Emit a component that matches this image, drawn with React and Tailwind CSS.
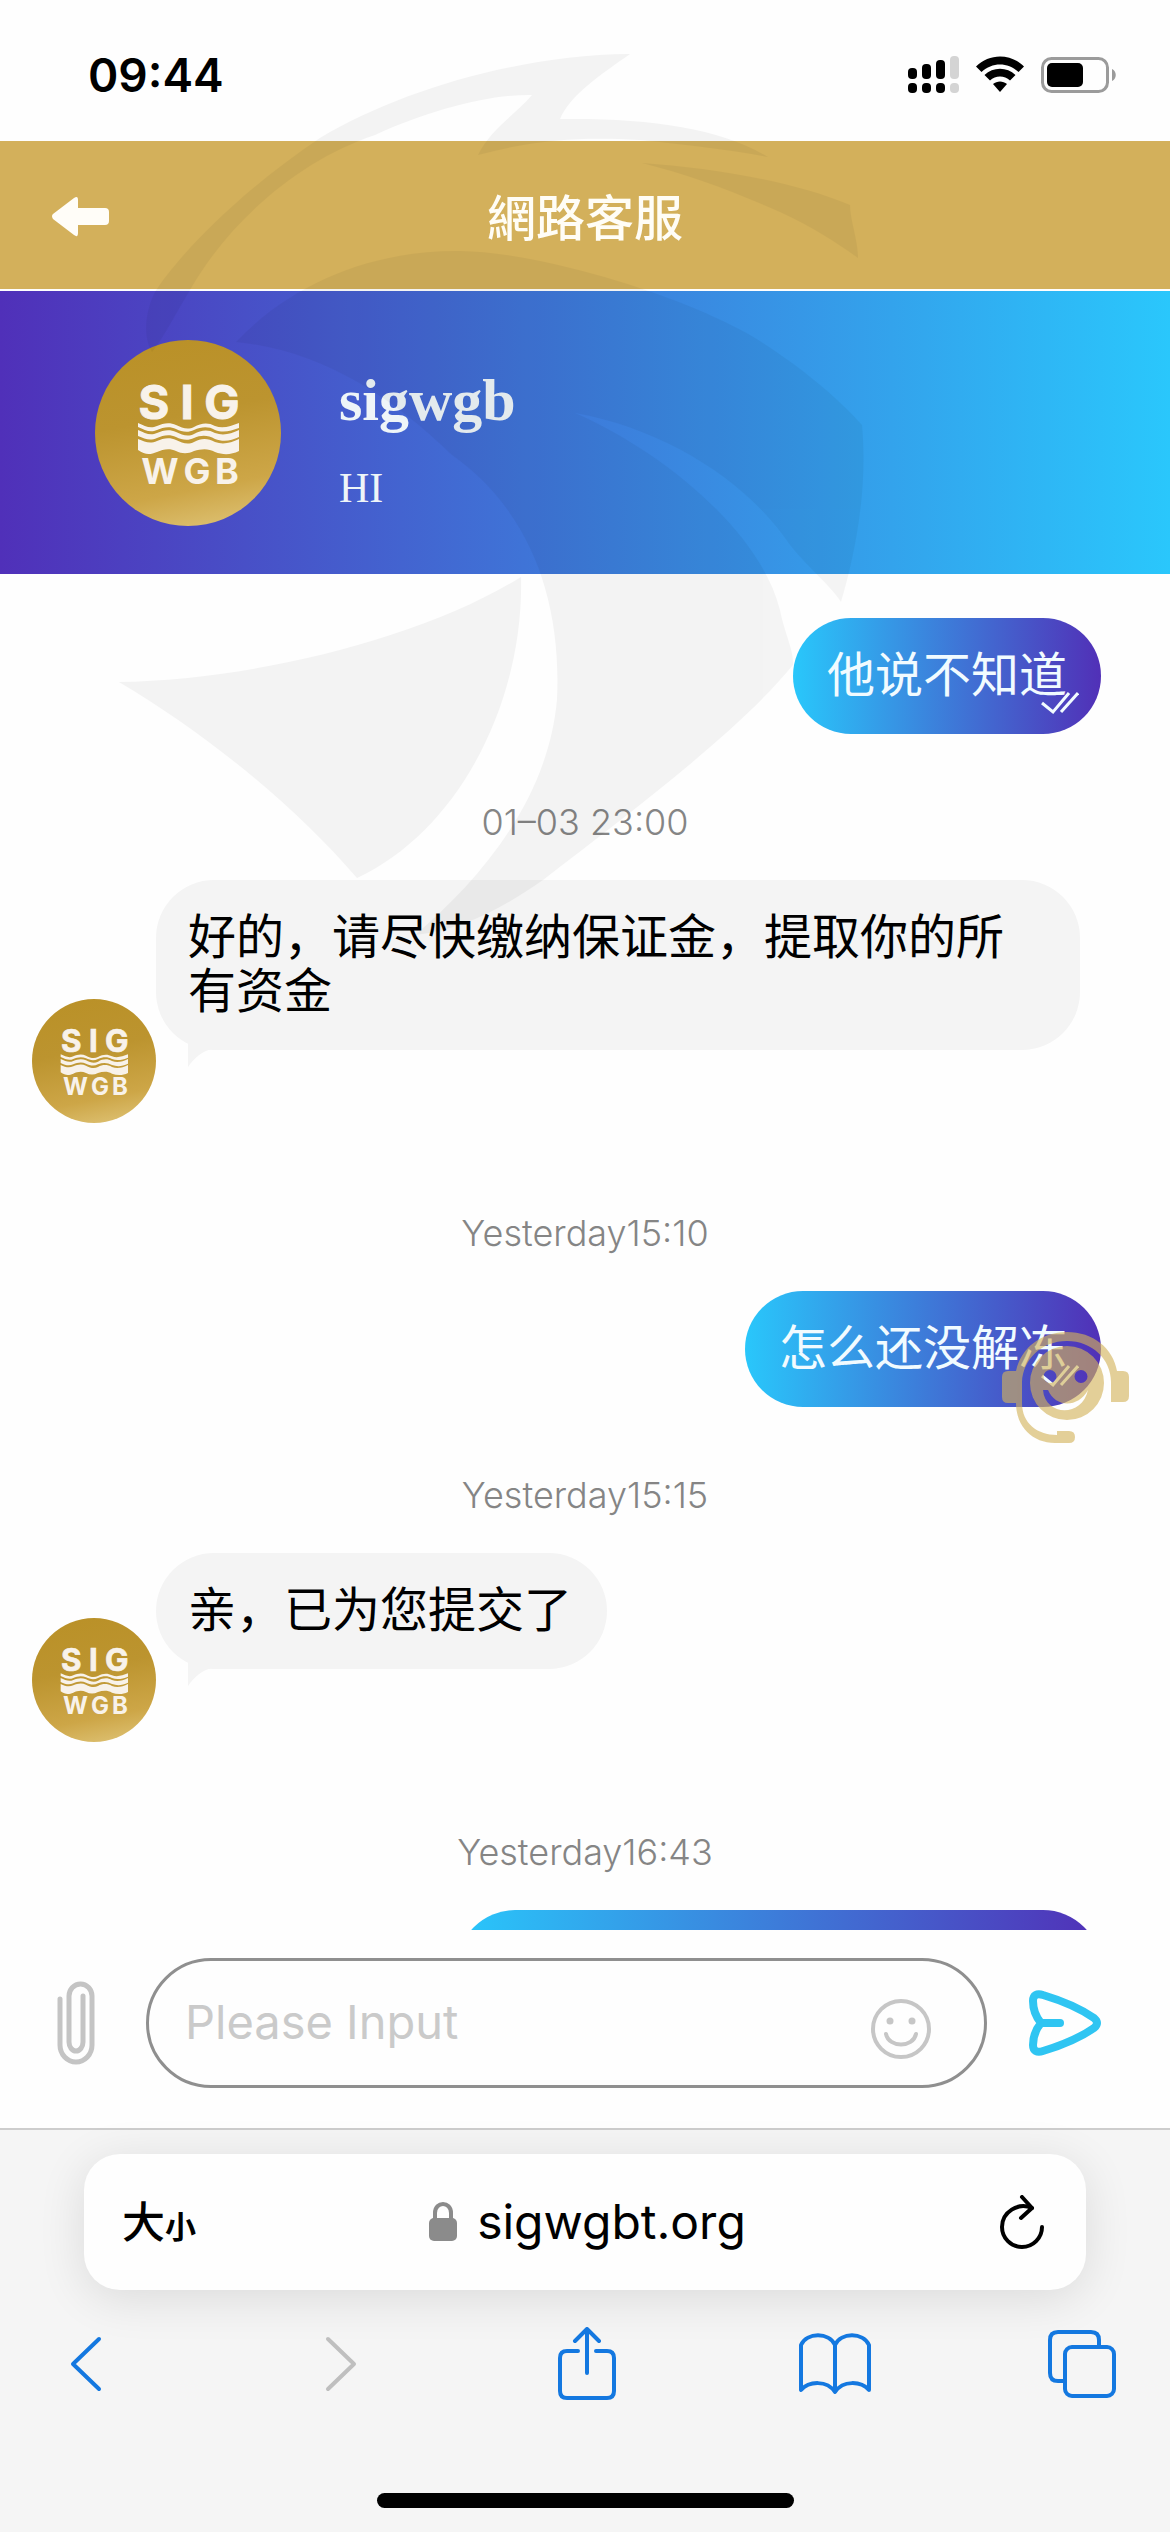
const CJK = "font-['Inter','Noto_Sans_CJK_SC',sans-serif]";

function Logo({ id, className }) {
  return (
    <svg viewBox="0 0 186 186" className={className} role="img" aria-label="SIG WGB">
      <defs>
        <linearGradient id={id} x1="0.4" y1="0" x2="0.6" y2="1">
          <stop offset="0" stopColor="#ba9128" />
          <stop offset="0.4" stopColor="#bc942f" />
          <stop offset="0.8" stopColor="#cda647" />
          <stop offset="1" stopColor="#dbbd6c" />
        </linearGradient>
      </defs>
      <circle cx="93" cy="93" r="93" fill={`url(#${id})`} />
      <g fill="#f8f2ea" fontFamily="Inter, sans-serif" fontWeight="700" textAnchor="middle">
        <g fontSize="47" stroke="#f8f2ea" strokeWidth="1">
          <text x="59" y="79">S</text>
          <text x="92" y="79">I</text>
          <text x="127" y="79">G</text>
        </g>
        <g fontSize="36">
          <text x="65" y="144">W</text>
          <text x="102" y="144">G</text>
          <text x="132" y="144">B</text>
        </g>
      </g>
      <g fill="#f8f2ea">
        <path d="M43 83 C50 86 55 89 62 86 C68 83 75 82 81 85 C87 88 93 90 99 87 C106 83 113 82 120 86 C128 89 136 86 144 83 V88 C136 91 128 93 120 90 C113 86 106 87 99 90 C93 93 87 92 81 89 C75 86 68 87 62 90 C55 93 50 90 43 87 Z" />
        <path d="M43 90 C50 93 55 96 62 93 C68 90 75 89 81 92 C87 95 93 97 99 94 C106 90 113 89 120 93 C128 96 136 94 144 90 V97 C136 101 128 102 120 99 C113 95 106 95 99 98 C93 101 87 100 81 97 C75 94 68 95 62 98 C55 101 50 99 43 96 Z" />
        <path d="M43 99 C50 102 55 104 62 101 C68 98 75 97 81 100 C87 103 93 105 99 102 C106 98 113 98 120 102 C128 105 136 103 144 99 V111 C136 115 128 115 120 112 C113 108 106 109 99 111 C93 114 87 114 81 111 C75 108 68 109 62 112 C55 115 50 115 43 110 Z" />
      </g>
    </svg>
  );
}

function Watermark() {
  return (
    <svg viewBox="0 0 1170 1000" className="pointer-events-none absolute inset-x-0 top-0 z-10 w-full" aria-hidden="true">
      <g fill="#000" opacity="0.038">
        <path d="M630 54 C520 55 400 90 320 138 C235 195 175 260 155 292 C146 310 142 335 152 352 C165 335 175 315 190 290 C230 220 300 160 375 135 C430 110 490 94 532 95 C515 115 490 130 478 155 C540 138 590 137 640 140 C690 145 730 150 768 157 C720 128 650 118 560 119 C570 95 600 75 630 54 Z" />
        <path d="M642 163 C690 175 730 190 780 212 C815 228 840 245 858 258 C858 240 850 220 850 205 C790 180 710 168 642 163 Z" />
        <path d="M236 342 C290 285 370 250 460 251 C540 252 680 295 750 335 C800 365 840 400 862 425 C868 490 855 555 841 602 C830 585 810 570 790 545 C750 485 670 430 575 413 C660 450 760 530 780 610 C785 635 794 650 793 665 C740 730 640 805 543 880 C500 910 460 930 415 935 C480 880 548 800 557 700 C562 600 530 510 452 455 C390 395 320 350 236 342 Z" />
        <path d="M119 682 C250 680 420 640 521 577 C524 700 460 830 357 878 C290 800 200 730 119 682 Z" />
      </g>
    </svg>
  );
}

function StatusIcons() {
  return (
    <div className="flex items-center gap-4">
      <svg viewBox="0 0 51 38" className="h-[38px] w-[51px]" role="img" aria-label="Signal">
        <rect x="0" y="12" width="9" height="11" rx="4" />
        <rect x="14" y="8" width="9" height="15" rx="4" />
        <rect x="28" y="4" width="9" height="19" rx="4" />
        <rect x="42" y="0" width="9" height="23" rx="4" fill="#d4d4d4" />
        <rect x="0" y="27" width="9" height="10" rx="4" />
        <rect x="14" y="27" width="9" height="10" rx="4" />
        <rect x="28" y="27" width="9" height="10" rx="4" />
        <rect x="42" y="27" width="9" height="10" rx="4" fill="#d4d4d4" />
      </svg>
      <svg viewBox="0 0 50 38" className="h-[38px] w-[50px]" role="img" aria-label="Wi-Fi">
        <path d="M1 10.500 C14 -3 36 -3 49 10.500 L43.500 16 C33 6 17 6 6.500 16 Z" />
        <path d="M9.500 19 C18 10.500 32 10.500 40.500 19 L35 24.500 C29.500 19 20.500 19 15 24.500 Z" />
        <path d="M18 28 C22 24.500 28 24.500 32 28 L25 36 Z" />
      </svg>
      <svg viewBox="0 0 75 38" className="h-[38px] w-[75px]" role="img" aria-label="Battery">
        <rect x="1.500" y="2.500" width="65" height="33" rx="9" fill="none" stroke="#9b9b9b" strokeWidth="3" />
        <rect x="6" y="7" width="36" height="24" rx="5" />
        <path d="M71 13 C76 15 76 23 71 25 Z" fill="#9b9b9b" />
      </svg>
    </div>
  );
}

function Timestamp({ children }) {
  return (
    <time className="mb-[33px] block text-center text-[36px] leading-[50px] font-light text-[#858585]">{children}</time>
  );
}

function Sent({ children }) {
  return (
    <div className="mb-[63px] flex justify-end pr-[69px]">
      <div className="relative rounded-[58px] bg-linear-to-r/srgb from-[#29c7fb] to-[#5130b7] px-[34px] pt-[30px] pb-8 text-[48px] leading-[54px] text-[#f1fbff]">
        {children}
        <svg viewBox="0 0 38 24" className="absolute right-[22px] bottom-[19px] h-6 w-[38px]" fill="none" stroke="#f1fbff" strokeWidth="3" aria-hidden="true">
          <path d="M1 12 L12 21 L28 2" />
          <path d="M20 21 L37 2" />
        </svg>
      </div>
    </div>
  );
}

function Received({ id, children }) {
  return (
    <div className="mb-[85px] flex items-end pr-[90px] pl-8">
      <Logo id={id} className="h-[124px] w-[124px] shrink-0" />
      <div className="relative mb-[73px] rounded-[58px] bg-[#f4f4f4] pt-[30px] pr-[35px] pb-8 pl-8 text-[48px] leading-[54px] text-black">
        {children}
        <svg viewBox="0 0 24 34" className="absolute -bottom-[18px] left-8 h-[34px] w-6" fill="#f4f4f4" aria-hidden="true">
          <path d="M0 0 H24 V15 C14 17 6 24 0 33 Z" />
        </svg>
      </div>
    </div>
  );
}

function SupportButton() {
  return (
    <button type="button" aria-label="Customer support" className="absolute top-[1331px] right-[41px] z-20">
      <svg viewBox="0 0 128 114" className="h-[114px] w-32">
        <g opacity="0.62" fill="#d4b35a">
          <path fillRule="evenodd" d="M66 15 A37 37 0 1 1 66 89 A37 37 0 1 1 66 15 Z M49 39 A6.500 6.500 0 1 0 49 52 A6.500 6.500 0 1 0 49 39 Z M80 39 A6.500 6.500 0 1 0 80 52 A6.500 6.500 0 1 0 80 39 Z M42 59 C44 85 81 87 87 59 C77 77 55 77 47 59 Z" />
          <path d="M15 40 C20 17 40 1 66 1 C92 1 112 17 116 40 H122 Q128 40 128 46 V65 Q128 71 122 71 H110 V51 C110 28 91 10 66 10 C40 10 22 29 21 51 V72 C21 92 36 104 56 104 V100 H68 Q74 100 74 106 Q74 112 68 112 H54 C32 112 15 96 15 72 H7 Q1 72 1 66 V46 Q1 40 7 40 Z" />
        </g>
      </svg>
    </button>
  );
}

export default function App() {
  return (
    <div className={`relative flex h-screen flex-col overflow-hidden bg-[#fefefe] ${CJK}`}>
      <div className="flex h-[141px] shrink-0 items-center justify-between pt-[9px] pr-[54px] pl-[88px]">
        <time className="text-[46px] leading-[50px] font-semibold text-black">09:44</time>
        <StatusIcons />
      </div>

      <header className="mb-0.5 grid h-[148px] shrink-0 grid-cols-[1fr_auto_1fr] items-center bg-[#d3b05b] px-[52px]">
        <button type="button" aria-label="Back" className="mt-1 justify-self-start">
          <svg viewBox="0 0 58 42" className="h-[42px] w-[58px]" fill="#fffdf8">
            <path d="M1 18 L22 2 Q26 -1 26 4 V12 H53 Q57 12 57 16 V25 Q57 29 53 29 H26 V37 Q26 42 22 39 L1 23 Q-1 20 1 18 Z" />
          </svg>
        </button>
        <h1 className="font-['Noto_Sans_CJK_TC',sans-serif] text-[49px] leading-[60px] font-medium text-[#fffdf6]">網路客服</h1>
      </header>

      <section className="flex h-[283px] shrink-0 items-center bg-linear-to-r/srgb from-[#5030b9] to-[#2ac7fc] pl-[95px]">
        <Logo id="gold-main" className="h-[186px] w-[186px] shrink-0" />
        <div className="mt-3 ml-[58px] font-['Liberation_Serif',serif] text-[#eef5f8]">
          <h2 className="text-[60px] leading-[70px] font-bold">sigwgb</h2>
          <p className="mt-7 text-[42px] leading-[50px]">HI</p>
        </div>
      </section>

      <main className="min-h-0 flex-1 overflow-hidden pt-11">
        <Sent>他说不知道</Sent>
        <Timestamp>01–03 23:00</Timestamp>
        <Received id="gold-a">好的，请尽快缴纳保证金，提取你的所有资金</Received>
        <Timestamp>Yesterday15:10</Timestamp>
        <Sent>怎么还没解冻</Sent>
        <Timestamp>Yesterday15:15</Timestamp>
        <Received id="gold-b">亲，已为您提交了</Received>
        <Timestamp>Yesterday16:43</Timestamp>
        <div className="mr-[69px] ml-auto h-[116px] w-[644px] rounded-[58px] bg-linear-to-r/srgb from-[#29c7fb] to-[#5130b7]" />
      </main>

      <form className="flex shrink-0 items-center pt-7 pr-[69px] pb-10 pl-[57px]" onSubmit={(e) => e.preventDefault()}>
        <button type="button" aria-label="Attach file" className="shrink-0">
          <svg viewBox="0 0 38 84" className="h-[84px] w-[38px]" fill="none" stroke="#c4c4c4" strokeWidth="5" strokeLinecap="round">
            <path d="M3 18 V64 A16 17 0 0 0 35 64 V15 A11.500 12 0 0 0 12 15 V61 A7 9 0 0 0 26 61 V15" />
          </svg>
        </button>
        <div className="mr-[42px] ml-[51px] flex min-w-0 flex-1 items-center rounded-[65px] border-[3px] border-[#8f8f8f] pr-[52px] pl-9">
          <input
            type="text"
            aria-label="Message"
            placeholder="Please Input"
            className="h-[124px] min-w-0 flex-1 bg-transparent pb-1 text-[47px] outline-none placeholder:text-[#cacaca]"
          />
          <button type="button" aria-label="Emoji" className="mt-3 shrink-0">
            <svg viewBox="0 0 62 62" className="h-[62px] w-[62px]" fill="none" stroke="#c6c6c6" strokeWidth="4" strokeLinecap="round">
              <circle cx="31" cy="31" r="28" />
              <circle cx="20" cy="23" r="3.500" fill="#c6c6c6" stroke="none" />
              <circle cx="42" cy="23" r="3.500" fill="#c6c6c6" stroke="none" />
              <path d="M16 36 C19 50 43 50 46 36" />
            </svg>
          </button>
        </div>
        <button type="submit" aria-label="Send" className="shrink-0">
          <svg viewBox="0 0 72 66" className="h-[66px] w-[72px]" fill="none" stroke="#2fc5f2" strokeWidth="8" strokeLinejoin="round" strokeLinecap="round">
            <path d="M4 11 C4 5 8 3 14 5 C34 11 52 19 65 28 Q71 33 65 38 C52 47 34 55 14 61 C8 63 4 61 4 55 C4 46 7 39 12 33 C7 27 4 20 4 11 Z" />
            <path d="M14 33 H31" />
          </svg>
        </button>
      </form>

      <footer className="shrink-0 border-t-2 border-[#cdcdcd] bg-[#f5f5f5] pt-6 pb-6">
        <div className="mx-[84px] grid h-[136px] grid-cols-[1fr_auto_1fr] items-center rounded-[36px] bg-[#fefefe] pr-[41px] pl-[38px] shadow-[0_8px_48px_rgba(0,0,0,0.11)]">
          <button type="button" aria-label="大小" className="mt-1 flex items-baseline justify-self-start font-medium text-black">
            <span className="text-[43px] leading-[50px]">大</span>
            <span className="text-[31px] leading-[50px] font-bold">小</span>
          </button>
          <a href="#address" className="flex items-center gap-5 pl-2 text-[48px] leading-[60px] text-black">
            <svg viewBox="0 0 28 40" className="h-10 w-7" aria-hidden="true">
              <path d="M6 18 V11 C6 -1 22 -1 22 11 V18" fill="none" stroke="#8b8b8b" strokeWidth="4" />
              <rect x="0" y="16" width="28" height="23" rx="5" fill="#8b8b8b" />
            </svg>
            sigwgbt.org
          </a>
          <button type="button" aria-label="Reload" className="justify-self-end">
            <svg viewBox="0 0 46 54" className="h-[54px] w-[46px]" fill="none" stroke="#000" strokeWidth="4" strokeLinecap="round" strokeLinejoin="round">
              <path d="M33 13 C19 7 3 17 3 32 A20 20 0 0 0 43 32" />
              <path d="M23 2 L33 13 L22 23" />
            </svg>
          </button>
        </div>

        <nav aria-label="Browser" className="mt-9 flex h-[76px] items-center justify-between pr-[54px] pl-[70px] text-[#1478e0]">
          <button type="button" aria-label="Go back">
            <svg viewBox="0 0 32 56" className="h-14 w-8" fill="none" stroke="currentColor" strokeWidth="4" strokeLinecap="round" strokeLinejoin="round">
              <path d="M29 3 L3 28 L29 53" />
            </svg>
          </button>
          <button type="button" aria-label="Go forward" className="ml-[72px] text-[#bfbfbf]">
            <svg viewBox="0 0 32 56" className="h-14 w-8" fill="none" stroke="currentColor" strokeWidth="4" strokeLinecap="round" strokeLinejoin="round">
              <path d="M3 3 L29 28 L3 53" />
            </svg>
          </button>
          <button type="button" aria-label="Share" className="ml-[50px]">
            <svg viewBox="0 0 58 74" className="h-[74px] w-[58px]" fill="none" stroke="currentColor" strokeWidth="4" strokeLinecap="round" strokeLinejoin="round">
              <path d="M20 24 H9 Q2 24 2 31 V64 Q2 71 9 71 H49 Q56 71 56 64 V31 Q56 24 49 24 H38" />
              <path d="M29 46 V3 M17 14 L29 2 L41 14" />
            </svg>
          </button>
          <button type="button" aria-label="Bookmarks" className="ml-8">
            <svg viewBox="0 0 72 62" className="h-[62px] w-[72px]" fill="none" stroke="currentColor" strokeWidth="4" strokeLinejoin="round">
              <path d="M36 59 C28 47 10 48 2 57 V12 C8 -1 30 -1 36 12 C42 -1 64 -1 70 12 V57 C62 48 44 47 36 59 Z" />
              <path d="M36 12 V58" />
            </svg>
          </button>
          <button type="button" aria-label="Tabs" className="ml-[26px]">
            <svg viewBox="0 0 68 68" className="h-[68px] w-[68px]" fill="none" stroke="currentColor" strokeWidth="4" strokeLinejoin="round">
              <path d="M51 16 V10 Q51 2 43 2 H10 Q2 2 2 10 V43 Q2 51 10 51 H16" />
              <rect x="17" y="17" width="49" height="49" rx="7" />
            </svg>
          </button>
        </nav>
        <div className="mx-auto mt-[91px] h-[15px] w-[417px] rounded-full bg-black" />
      </footer>

      <Watermark />
      <SupportButton />
    </div>
  );
}
